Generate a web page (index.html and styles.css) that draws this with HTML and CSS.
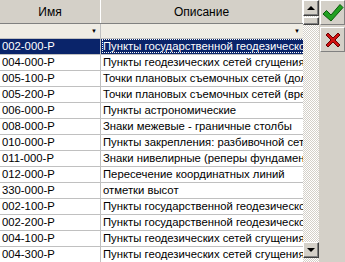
FILE: index.html
```html
<!DOCTYPE html>
<html lang="ru">
<head>
  <meta charset="UTF-8" />
  <title>Классификатор</title>
  <link rel="stylesheet" href="styles.css">
</head>
<body>
  <div class="window">
    <div class="grid">
      <div class="table">
        <div class="head">
          <div class="cell c1">Имя</div>
          <div class="cell c2">Описание</div>
        </div>
        <div class="filter">
          <div class="cell c1"><span class="drop">&#9660;</span></div>
          <div class="cell c2"><span class="drop">&#9660;</span></div>
        </div>
        <div class="row selected">
          <div class="cell c1">002-000-P</div>
          <div class="cell c2"><span class="focus">Пункты государственной геодезической сети</span></div>
        </div>
        <div class="row"><div class="cell c1">004-000-P</div><div class="cell c2">Пункты геодезических сетей сгущения</div></div>
        <div class="row"><div class="cell c1">005-100-P</div><div class="cell c2">Точки плановых съемочных сетей (долговременные)</div></div>
        <div class="row"><div class="cell c1">005-200-P</div><div class="cell c2">Точки плановых съемочных сетей (временные)</div></div>
        <div class="row"><div class="cell c1">006-000-P</div><div class="cell c2">Пункты астрономические</div></div>
        <div class="row"><div class="cell c1">008-000-P</div><div class="cell c2">Знаки межевые - граничные столбы</div></div>
        <div class="row"><div class="cell c1">010-000-P</div><div class="cell c2">Пункты закрепления: разбивочной сети</div></div>
        <div class="row"><div class="cell c1">011-000-P</div><div class="cell c2">Знаки нивелирные (реперы фундаментальные)</div></div>
        <div class="row"><div class="cell c1">012-000-P</div><div class="cell c2">Пересечение координатных линий</div></div>
        <div class="row"><div class="cell c1">330-000-P</div><div class="cell c2">отметки высот</div></div>
        <div class="row"><div class="cell c1">002-100-P</div><div class="cell c2">Пункты государственной геодезической сети</div></div>
        <div class="row"><div class="cell c1">002-200-P</div><div class="cell c2">Пункты государственной геодезической сети</div></div>
        <div class="row"><div class="cell c1">004-100-P</div><div class="cell c2">Пункты геодезических сетей сгущения</div></div>
        <div class="row"><div class="cell c1">004-300-P</div><div class="cell c2">Пункты геодезических сетей сгущения</div></div>
      </div>
      <div class="scroll">
        <div class="sbtn"><span class="arrow up"></span></div>
        <div class="thumb"></div>
        <div class="track"></div>
        <div class="sbtn"><span class="arrow down"></span></div>
      </div>
    </div>
    <div class="side">
      <button class="tool" title="OK">
        <svg width="22" height="20" viewBox="0 0 22 20">
          <path d="M1 11 L4.5 7.5 L9 12 L18 1.5 L21 4.5 L9 18 Z" fill="#22a022" stroke="#0b5a0b" stroke-width="1"/>
        </svg>
      </button>
      <button class="tool" title="Отмена">
        <svg width="18" height="18" viewBox="0 0 18 18">
          <path d="M2 4 L4 2 L9 7 L14 2 L16 4 L11 9 L16 14 L14 16 L9 11 L4 16 L2 14 L7 9 Z" fill="#d01010" stroke="#6a0000" stroke-width="1"/>
        </svg>
      </button>
    </div>
  </div>
</body>
</html>
```

FILE: styles.css
```css
body {
  margin: 0;
  background: #d4d0c8;
  font-family: "Liberation Sans", Arial, sans-serif;
  font-size: 11.3px;
  color: #000;
}
.window {
  display: flex;
  width: 345px;
  height: 262px;
  overflow: hidden;
}
.grid {
  display: flex;
  width: 319px;
  background: #fff;
}
.table {
  width: 303px;
  overflow: hidden;
}
.head, .filter, .row {
  display: flex;
}
.cell {
  white-space: nowrap;
  overflow: hidden;
  box-sizing: border-box;
}
.c1 {
  width: 101px;
  border-right: 1px solid #c0c0c0;
}
.c2 {
  width: 202px;
}
.head {
  height: 23px;
  background: #d4d0c8;
  border-bottom: 1px solid #808080;
  font-size: 12px;
}
.head .cell {
  display: flex;
  align-items: center;
  justify-content: center;
  border-right: 1px solid #fff;
}
.filter {
  height: 14px;
  background: #efece4;
  border-bottom: 1px solid #c0c0c0;
}
.filter .cell {
  display: flex;
  justify-content: flex-end;
  align-items: center;
  padding-right: 3px;
}
.drop {
  font-size: 6px;
}
.row {
  height: 15px;
  border-bottom: 1px solid #c0c0c0;
  border-left: 1px solid #000;
  margin-left: -1px;
}
.row .cell {
  line-height: 15px;
  padding-left: 2px;
}
.row.selected {
  background: #0a246a;
  color: #fff;
}
.focus {
  outline: 1px dotted #fff;
}
.scroll {
  display: flex;
  flex-direction: column;
  width: 16px;
  background: repeating-conic-gradient(#d4d0c8 0 25%, #fff 0 50%) 0 0 / 2px 2px;
}
.sbtn, .thumb {
  box-sizing: border-box;
  background: #d4d0c8;
  border: 1px solid;
  border-color: #fff #404040 #404040 #fff;
  box-shadow: inset -1px -1px #808080;
}
.sbtn {
  height: 16px;
  display: flex;
  align-items: center;
  justify-content: center;
}
.thumb {
  height: 8px;
  margin-top: 1px;
}
.track {
  flex: 1;
}
.scroll .sbtn:last-child {
  margin-bottom: 4px;
}
.arrow {
  width: 0;
  height: 0;
  border-left: 4px solid transparent;
  border-right: 4px solid transparent;
}
.arrow.up {
  border-bottom: 4px solid #000;
}
.arrow.down {
  border-top: 4px solid #000;
}
.side {
  display: flex;
  flex-direction: column;
  gap: 2px;
  padding-left: 1px;
}
.tool {
  width: 25px;
  height: 25px;
  padding: 0;
  display: flex;
  align-items: center;
  justify-content: center;
  background: #d4d0c8;
  border: 1px solid;
  border-color: #fff #808080 #808080 #fff;
}
```
